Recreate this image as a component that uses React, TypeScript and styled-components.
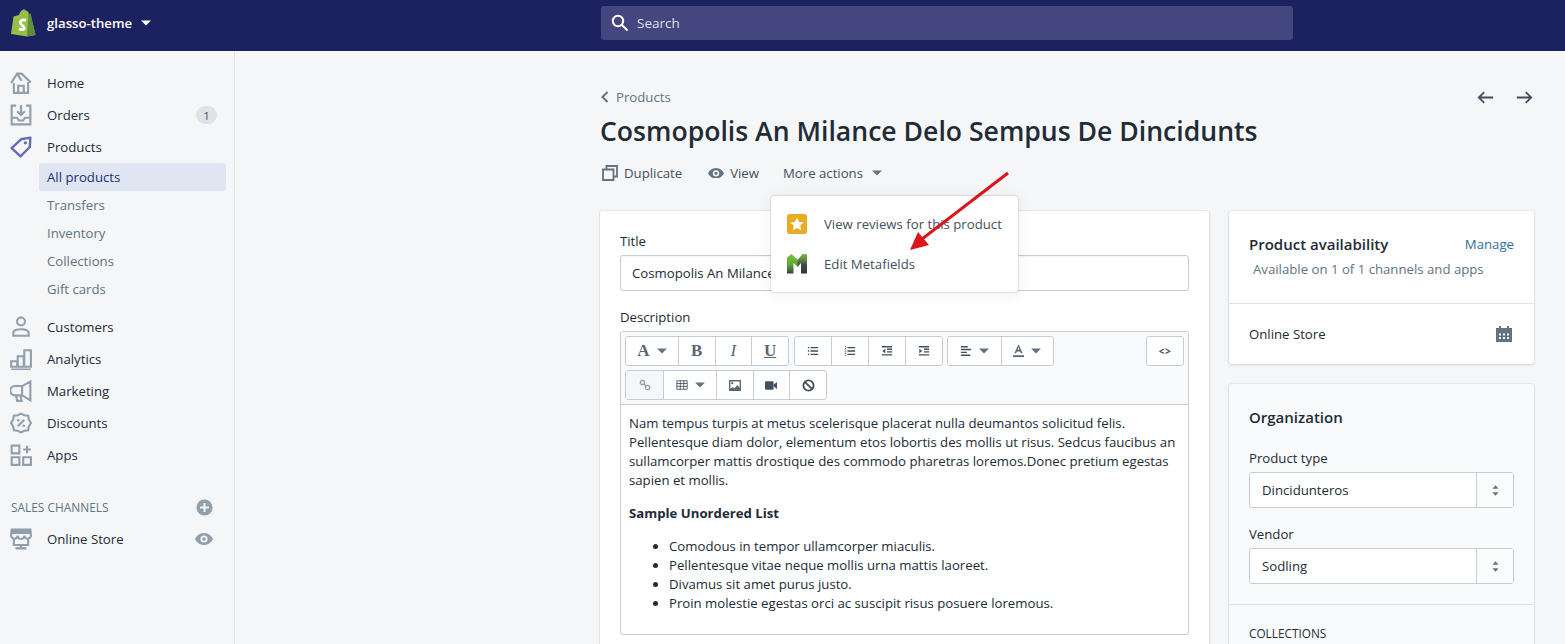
import styled, { createGlobalStyle } from "styled-components";
import { ReactNode } from "react";

const GlobalStyle = createGlobalStyle`
  html, body {
    margin: 0;
    padding: 0;
    height: 644px;
    overflow: hidden;
    background: #f4f6f8;
    font-family: "Open Sans", "Noto Sans", sans-serif;
    font-size: 13.2px;
    color: #212b36;
  }
  * { box-sizing: border-box; }
`;

const Page = styled.div`
  width: 1565px;
  height: 644px;
  overflow: hidden;
  position: relative;
`;

const TopBar = styled.header`
  height: 51px;
  padding-bottom: 5px;
  background: #1c2260;
  display: flex;
  align-items: center;
`;

const StoreArea = styled.div`
  width: 601px;
  padding-left: 11px;
  display: flex;
  align-items: center;
  color: #fff;
  font-weight: 600;
`;

const StoreName = styled.span`
  margin-left: 11px;
  margin-right: 9px;
`;

const SearchBox = styled.div`
  width: 692px;
  height: 34px;
  background: #43467f;
  border-radius: 3px;
  display: flex;
  align-items: center;
  gap: 8px;
  padding-left: 10px;
  color: #dfe3e8;
  font-size: 13.5px;
`;

const Body = styled.div`
  display: flex;
  height: 593px;
`;

const Sidebar = styled.nav`
  width: 235px;
  flex: none;
  border-right: 1px solid #dfe3e8;
  padding-top: 16px;
`;

const NavRow = styled.div`
  height: 32px;
  display: flex;
  align-items: center;
  padding-left: 11px;
  padding-right: 17px;
  color: #212b36;
  font-weight: 500;
`;

const NavIcon = styled.span`
  width: 20px;
  height: 22px;
  margin-right: 16px;
  display: flex;
  align-items: center;
  justify-content: center;
`;

const NavLabel = styled.span`
  flex: 1;
`;

const Badge = styled.span`
  width: 21px;
  height: 18px;
  border-radius: 9px;
  background: #dfe3e8;
  color: #454f5b;
  font-size: 11.5px;
  display: flex;
  align-items: center;
  justify-content: center;
`;

const EyeSlot = styled.span`
  padding-right: 4px;
`;

const SubList = styled.div`
  margin-bottom: 8px;
`;

const SubRow = styled.div<{ $active?: boolean }>`
  height: 28px;
  margin-left: 39px;
  margin-right: 8px;
  padding-left: 8px;
  display: flex;
  align-items: center;
  border-radius: 3px;
  color: ${(p) => (p.$active ? "#202e78" : "#637381")};
  background: ${(p) => (p.$active ? "#e0e5f3" : "transparent")};
  font-weight: ${(p) => (p.$active ? 500 : 400)};
`;

const ChannelsHeading = styled.div`
  margin-top: 20px;
  height: 32px;
  padding-left: 11px;
  padding-right: 21px;
  display: flex;
  align-items: center;
  justify-content: space-between;
  color: #637381;
  font-size: 11.9px;
`;

const Main = styled.main`
  flex: 1;
  padding: 0 31px 0 365px;
`;

const HeaderTop = styled.div`
  height: 20px;
  margin-top: 36px;
  display: flex;
  align-items: center;
  justify-content: space-between;
`;

const Breadcrumb = styled.div`
  display: flex;
  align-items: center;
  gap: 6px;
  color: #637381;
`;

const Pager = styled.div`
  display: flex;
  gap: 20px;
  padding-right: 1px;
`;

const Title = styled.h1`
  margin: 6px 0 0;
  font-size: 26.6px;
  line-height: 36px;
  font-weight: 600;
  color: #212b36;
`;

const Actions = styled.div`
  margin-top: 14px;
  height: 20px;
  display: flex;
  align-items: center;
  color: #454f5b;
`;

const ActionItem = styled.span<{ $after: number; $inner: number }>`
  display: flex;
  align-items: center;
  gap: ${(p) => p.$inner}px;
  padding-left: 2px;
  margin-right: ${(p) => p.$after}px;
`;

const Columns = styled.div`
  display: flex;
  gap: 20px;
  margin-top: 28px;
  align-items: flex-start;
`;

const LeftColumn = styled.div`
  width: 609px;
`;

const RightColumn = styled.div`
  width: 305px;
  display: flex;
  flex-direction: column;
  gap: 20px;
`;

const Card = styled.section<{ $tint?: boolean }>`
  background: ${(p) => (p.$tint ? "#f9fafb" : "#fff")};
  border-radius: 3px;
  box-shadow: 0 0 0 1px rgba(63, 63, 68, 0.05), 0 1px 3px 0 rgba(63, 63, 68, 0.15);
`;

const MainCardBody = styled.div`
  padding: 20px 20px 30px;
`;

const FieldLabel = styled.div`
  line-height: 20px;
  color: #212b36;
  margin-bottom: 4px;
`;

const TextInput = styled.div`
  height: 36px;
  border: 1px solid #c4cdd5;
  border-radius: 3px;
  background: #fff;
  padding-left: 11px;
  display: flex;
  align-items: center;
  margin-bottom: 16px;
  box-shadow: inset 0 1px 0 rgba(22, 29, 37, 0.03);
`;

const Editor = styled.div`
  border: 1px solid #c4cdd5;
  border-radius: 3px;
  height: 304px;
  overflow: hidden;
`;

const EditorToolbar = styled.div`
  background: #f9fafb;
  border-bottom: 1px solid #c4cdd5;
  height: 73px;
  padding: 4px 4px 0 4px;
  display: flex;
  flex-direction: column;
  gap: 4px;
`;

const ToolbarRow = styled.div`
  display: flex;
  gap: 4.5px;
`;

const ToolGroup = styled.div<{ $end?: boolean }>`
  display: flex;
  height: 30px;
  background: #fff;
  border: 1px solid #c4cdd5;
  border-radius: 3px;
  margin-left: ${(p) => (p.$end ? "auto" : "0")};
`;

const ToolButton = styled.div<{ $w?: number; $pressed?: boolean }>`
  width: ${(p) => p.$w ?? 36.75}px;
  display: flex;
  align-items: center;
  justify-content: center;
  gap: 7px;
  color: #454f5b;
  background: ${(p) => (p.$pressed ? "#f4f6f8" : "transparent")};
  & + & {
    border-left: 1px solid #c4cdd5;
  }
`;

const SerifGlyph = styled.span<{ $italic?: boolean; $underline?: boolean }>`
  font-family: "Liberation Serif", serif;
  font-weight: ${(p) => (p.$italic ? 400 : 700)};
  font-style: ${(p) => (p.$italic ? "italic" : "normal")};
  text-decoration: ${(p) => (p.$underline ? "underline" : "none")};
  font-size: 17px;
  color: #5b6770;
`;

const CodeGlyph = styled.span`
  font-size: 10px;
  font-weight: 700;
  letter-spacing: 0.5px;
`;

const EditorText = styled.div`
  padding: 9px 8px 0;
  line-height: 19px;
  color: #212b36;
`;

const Para = styled.p`
  margin: 0 0 14px;
`;

const BulletList = styled.ul`
  margin: 0;
  padding-left: 40px;
`;

const AvailabilityHead = styled.div`
  padding: 20px 20px 0;
  height: 93px;
  border-bottom: 1px solid #dfe3e8;
`;

const HeadRow = styled.div`
  display: flex;
  justify-content: space-between;
  line-height: 26px;
`;

const CardTitle = styled.h2`
  margin: 0;
  font-size: 15px;
  font-weight: 600;
  color: #212b36;
`;

const LinkText = styled.span`
  color: #2f6f9f;
`;

const Muted = styled.div`
  color: #637381;
  padding-left: 4px;
  line-height: 24px;
`;

const ChannelRow = styled.div`
  height: 60px;
  padding: 0 22px 0 20px;
  display: flex;
  align-items: center;
  justify-content: space-between;
  color: #212b36;
`;

const OrgSection = styled.div`
  padding: 20px 20px 20px;
  border-bottom: 1px solid #dfe3e8;
`;

const OrgTitle = styled(CardTitle)`
  line-height: 26px;
  margin-bottom: 18px;
`;

const SelectBox = styled.div`
  height: 36px;
  border: 1px solid #c4cdd5;
  border-radius: 3px;
  background: #fff;
  display: flex;
  margin-bottom: 16px;
  &:last-child {
    margin-bottom: 0;
  }
`;

const SelectValue = styled.div`
  flex: 1;
  padding-left: 12px;
  display: flex;
  align-items: center;
  color: #212b36;
`;

const SelectStepper = styled.div`
  width: 37px;
  border-left: 1px solid #c4cdd5;
  background: #fafbfb;
  display: flex;
  align-items: center;
  justify-content: center;
`;

const CollectionsSection = styled.div`
  padding: 20px;
  font-size: 11.8px;
  color: #212b36;
  line-height: 16px;
`;

const Popover = styled.div`
  position: absolute;
  left: 771px;
  top: 196px;
  width: 247px;
  height: 96px;
  background: #fff;
  border-radius: 3px;
  box-shadow: 0 0 0 1px rgba(6, 44, 82, 0.1), 0 2px 16px rgba(33, 43, 54, 0.08);
  padding: 8px 16px;
  z-index: 2;
`;

const PopoverItem = styled.div`
  height: 40px;
  display: flex;
  align-items: center;
  gap: 17px;
  color: #454f5b;
`;

const ArrowMark = styled.svg`
  position: absolute;
  left: 900px;
  top: 165px;
  z-index: 3;
`;

const Caret = ({ color = "#637381", size = 10 }: { color?: string; size?: number }) => (
  <svg width={size} height={size * 0.6} viewBox="0 0 10 6">
    <path d="M0 0.5h10L5 5.5z" fill={color} />
  </svg>
);

const NavSvg = styled.svg`
  display: block;
  flex: none;
`;

const Ico = ({ children }: { children: ReactNode }) => (
  <NavSvg width={22} height={22} viewBox="0 0 20 20" fill="none" stroke="#919eab" strokeWidth={1.9}>
    {children}
  </NavSvg>
);

const HomeIcon = () => (
  <Ico>
    <path d="M1 10L6.500 1.500h4L19 9.500M3.500 10v9h13V9M6.500 1.500L10.500 8M7.500 19v-6.500h5V19" />
  </Ico>
);
const OrdersIcon = () => (
  <Ico>
    <path d="M5.500 1.500H1.500v17h17v-17h-4M1.500 12.500h5l1.500 2.500h4l1.500-2.500h5M10 1v9M6.500 6.500l3.500 3.500 3.500-3.500" />
  </Ico>
);
const TagIcon = () => (
  <Ico>
    <path d="M1.500 11L10 3l8.500-1.500L18 10l-8.500 8.500z" stroke="#666db3" strokeLinejoin="round" strokeWidth={2.2} />
    <circle cx="14" cy="6.200" r="1.500" fill="#666db3" stroke="none" />
  </Ico>
);
const CustomerIcon = () => (
  <Ico>
    <circle cx="10" cy="5" r="3.600" />
    <path d="M3 15.500c0-2.600 3.500-3.500 7-3.500s7 .9 7 3.500V18H3z" />
  </Ico>
);
const AnalyticsIcon = () => (
  <Ico>
    <path d="M1 12h5.500v5H1zM7 7.500h5.500V17H7zM13 2h6v15h-6zM1 19.500h18" />
  </Ico>
);
const MarketingIcon = () => (
  <Ico>
    <path d="M18.500 1.500v17L11 14H4.500a3.500 3.500 0 010-8.500H11zM5.500 14l1 5h4l-1-5M11 6v8" />
  </Ico>
);
const DiscountIcon = () => (
  <Ico>
    <path d="M10 1.500l3 1.500 3.500.3.500 3.300L19 10l-2 3.400-.5 3.300-3.500.3-3 1.500-3-1.500-3.500-.3-.5-3.300L1 10l2-3.400.5-3.300L7 3z" />
    <path d="M7 13l6-6" />
    <circle cx="7.500" cy="7.500" r="1.200" fill="#919eab" stroke="none" />
    <circle cx="12.500" cy="12.500" r="1.200" fill="#919eab" stroke="none" />
  </Ico>
);
const AppsIcon = () => (
  <Ico>
    <path d="M1.500 1.500h7v7h-7zM1.500 12h7v7h-7zM12 12h7v7h-7zM15.500 1.500v7M12 5h7" />
  </Ico>
);
const StoreIcon = () => (
  <Ico>
    <path d="M1.500 1.500h17l.5 5a3 3 0 01-6 .5 3 3 0 01-6 0 3 3 0 01-6-.5zM3.500 10v5.500h13V10M10 15.500v3M5 18.500h10" />
    <path d="M1.500 1.500h17l.4 4H1.100z" fill="#919eab" stroke="none" />
  </Ico>
);

const EyeSvg = styled.svg`
  display: block;
`;

const EyeIcon = ({ color = "#919eab", w = 18 }: { color?: string; w?: number }) => (
  <EyeSvg width={w} height={w * 0.67} viewBox="0 0 18 12">
    <path
      fillRule="evenodd"
      d="M9 0C4.500 0 1.200 3.200 0 6c1.200 2.800 4.500 6 9 6s7.800-3.200 9-6c-1.200-2.800-4.500-6-9-6zm0 2.400a3.600 3.600 0 110 7.200 3.600 3.600 0 010-7.200zm0 1.800a1.800 1.800 0 100 3.600 1.800 1.800 0 000-3.600z"
      fill={color}
    />
  </EyeSvg>
);

const PlusCircle = () => (
  <svg width="17" height="17" viewBox="0 0 17 17">
    <circle cx="8.500" cy="8.500" r="8" fill="#919eab" />
    <path d="M8.500 4v9M4 8.500h9" stroke="#f4f6f8" strokeWidth="2" />
  </svg>
);

const ShopifyLogo = () => (
  <svg width="25" height="28" viewBox="0 0 25 28" style={{ display: "block" }}>
    <path
      d="M2.500 7.500L8 6c.8-3 2.800-5.500 5-5.500 1 0 1.500.6 2 1.200 1.500-.2 2.500 1.500 3 3.300l1.500-.3L24.500 26 16 27.500 0 25z"
      fill="#95bf47"
    />
    <path d="M19.500 4.700L24.500 26 16 27.500 17.500 5z" fill="#5e8e3e" />
    <path
      d="M15 11.500c-2-1-5.500-.7-5.800 2-.3 2.500 4.500 3.200 4.200 5.800-.2 1.700-3 1.800-5.400.4"
      stroke="#fff"
      strokeWidth="2.800"
      fill="none"
    />
  </svg>
);

const SearchIcon = () => (
  <svg width="18" height="18" viewBox="0 0 18 18" fill="none" stroke="#fff" strokeWidth="2">
    <circle cx="7" cy="7" r="5.200" />
    <path d="M11 11l5.500 5.500" />
  </svg>
);

const ArrowSvg = styled.svg<{ $flip?: boolean }>`
  transform: ${(p) => (p.$flip ? "scaleX(-1)" : "none")};
`;

const PagerArrow = ({ flip }: { flip?: boolean }) => (
  <ArrowSvg $flip={flip} width="18" height="15" viewBox="0 0 20 16" fill="none" stroke="#454f5b" strokeWidth="2">
    <path d="M18 8H2M8 2L2 8l6 6" />
  </ArrowSvg>
);

const ChevronLeft = () => (
  <svg width="10" height="14" viewBox="0 0 10 14" fill="none" stroke="#637381" strokeWidth="2">
    <path d="M7.500 2L2.500 7l5 5" />
  </svg>
);

const DuplicateIcon = () => (
  <svg width="16" height="16" viewBox="0 0 16 16" fill="none" stroke="#637381" strokeWidth="1.800">
    <path d="M4.500 4.500V1h10.500v10.500h-3.500" />
    <path d="M1 4.500h10.500V15H1z" />
  </svg>
);

const StarBadge = () => (
  <svg width="20" height="20" viewBox="0 0 20 20" style={{ display: "block" }}>
    <rect width="20" height="20" rx="2.500" fill="#e8ab25" />
    <path d="M10 3.500l2 4.400 4.800.5-3.600 3.200 1 4.700-4.200-2.400-4.200 2.400 1-4.700L3.200 8.400 8 7.900z" fill="#fff" />
  </svg>
);

const MetafieldsLogo = () => (
  <svg width="20" height="20" viewBox="0 0 20 20" style={{ display: "block" }}>
    <defs>
      <linearGradient id="mfLeft" x1="0" y1="0" x2="0" y2="1">
        <stop offset="0" stopColor="#7ec242" />
        <stop offset="0.55" stopColor="#5fa83a" />
        <stop offset="1" stopColor="#3a3f3f" />
      </linearGradient>
      <linearGradient id="mfRight" x1="0" y1="0" x2="0" y2="1">
        <stop offset="0" stopColor="#76bd40" />
        <stop offset="0.35" stopColor="#5a7a44" />
        <stop offset="0.55" stopColor="#454a48" />
        <stop offset="1" stopColor="#2f3336" />
      </linearGradient>
    </defs>
    <path d="M0 19.500V3.500L4.500 0 11 6v7L6.500 9v10.500z" fill="url(#mfLeft)" />
    <path d="M10.500 6l5-6H20v19.500h-6V9l-3.500 4z" fill="url(#mfRight)" />
  </svg>
);

const ToolSvg = ({ children, w = 12 }: { children: ReactNode; w?: number }) => (
  <svg width={w} height={w} viewBox="0 0 14 14" fill="none" stroke="#454f5b" strokeWidth="1.600">
    {children}
  </svg>
);

const CalendarIcon = () => (
  <svg width="16" height="16" viewBox="0 0 16 16">
    <path d="M3 0h2v2h6V0h2v2h3v3H0V2h3z" fill="#637381" />
    <path d="M0 5h16v11H0z" fill="#637381" />
    <path d="M3 7.500h2v2H3zM7 7.500h2v2H7zM11 7.500h2v2h-2zM3 11h2v2H3zM7 11h2v2H7zM11 11h2v2h-2z" fill="#fff" />
  </svg>
);

const StepperIcon = () => (
  <svg width="7" height="11" viewBox="0 0 8 12">
    <path d="M4 0l3.500 4H.5zM4 12L.5 8h7z" fill="#637381" />
  </svg>
);

const Select = ({ value }: { value: string }) => (
  <SelectBox>
    <SelectValue>{value}</SelectValue>
    <SelectStepper>
      <StepperIcon />
    </SelectStepper>
  </SelectBox>
);

const topNav = [
  { label: "Home", icon: <HomeIcon /> },
  { label: "Orders", icon: <OrdersIcon />, badge: "1" },
  { label: "Products", icon: <TagIcon /> },
];

const lowerNav = [
  { label: "Customers", icon: <CustomerIcon /> },
  { label: "Analytics", icon: <AnalyticsIcon /> },
  { label: "Marketing", icon: <MarketingIcon /> },
  { label: "Discounts", icon: <DiscountIcon /> },
  { label: "Apps", icon: <AppsIcon /> },
];

const subNav = ["All products", "Transfers", "Inventory", "Collections", "Gift cards"];

const App = () => {
  return (
    <Page>
      <GlobalStyle />
      <TopBar>
        <StoreArea>
          <ShopifyLogo />
          <StoreName>glasso-theme</StoreName>
          <Caret color="#fff" />
        </StoreArea>
        <SearchBox>
          <SearchIcon />
          Search
        </SearchBox>
      </TopBar>
      <Body>
        <Sidebar>
          {topNav.map((item) => (
            <NavRow key={item.label}>
              <NavIcon>{item.icon}</NavIcon>
              <NavLabel>{item.label}</NavLabel>
              {item.badge && <Badge>{item.badge}</Badge>}
            </NavRow>
          ))}
          <SubList>
            {subNav.map((label, i) => (
              <SubRow key={label} $active={i === 0}>
                {label}
              </SubRow>
            ))}
          </SubList>
          {lowerNav.map((item) => (
            <NavRow key={item.label}>
              <NavIcon>{item.icon}</NavIcon>
              <NavLabel>{item.label}</NavLabel>
            </NavRow>
          ))}
          <ChannelsHeading>
            SALES CHANNELS
            <PlusCircle />
          </ChannelsHeading>
          <NavRow>
            <NavIcon>
              <StoreIcon />
            </NavIcon>
            <NavLabel>Online Store</NavLabel>
            <EyeSlot>
              <EyeIcon />
            </EyeSlot>
          </NavRow>
        </Sidebar>
        <Main>
          <HeaderTop>
            <Breadcrumb>
              <ChevronLeft />
              Products
            </Breadcrumb>
            <Pager>
              <PagerArrow />
              <PagerArrow flip />
            </Pager>
          </HeaderTop>
          <Title>Cosmopolis An Milance Delo Sempus De Dincidunts</Title>
          <Actions>
            <ActionItem $after={24} $inner={6}>
              <DuplicateIcon />
              Duplicate
            </ActionItem>
            <ActionItem $after={22} $inner={6}>
              <EyeIcon color="#637381" w={16} />
              View
            </ActionItem>
            <ActionItem $after={0} $inner={9}>
              More actions
              <Caret />
            </ActionItem>
          </Actions>
          <Columns>
            <LeftColumn>
              <Card>
                <MainCardBody>
                  <FieldLabel>Title</FieldLabel>
                  <TextInput>Cosmopolis An Milance Delo Sempus De Dincidunts</TextInput>
                  <FieldLabel>Description</FieldLabel>
                  <Editor>
                    <EditorToolbar>
                      <ToolbarRow>
                        <ToolGroup>
                          <ToolButton $w={51.75}>
                            <SerifGlyph>A</SerifGlyph>
                            <Caret />
                          </ToolButton>
                          <ToolButton>
                            <SerifGlyph>B</SerifGlyph>
                          </ToolButton>
                          <ToolButton>
                            <SerifGlyph $italic>I</SerifGlyph>
                          </ToolButton>
                          <ToolButton>
                            <SerifGlyph $underline>U</SerifGlyph>
                          </ToolButton>
                        </ToolGroup>
                        <ToolGroup>
                          <ToolButton>
                            <ToolSvg>
                              <path d="M4 3h9M4 7h9M4 11h9M1 3h1.500M1 7h1.500M1 11h1.500" />
                            </ToolSvg>
                          </ToolButton>
                          <ToolButton>
                            <ToolSvg>
                              <path d="M4 3h9M4 7h9M4 11h9" />
                              <path d="M1 2h1.500M1 4h1.500M1 6h1.500M1 8h1.500M1 10h1.500M1 12h1.500" strokeWidth="1" />
                            </ToolSvg>
                          </ToolButton>
                          <ToolButton>
                            <ToolSvg>
                              <path d="M1 2h12M7 5h6M7 8h6M1 11.500h12" />
                              <path d="M5 4.500v5L1.500 7z" fill="#454f5b" stroke="none" />
                            </ToolSvg>
                          </ToolButton>
                          <ToolButton>
                            <ToolSvg>
                              <path d="M1 2h12M7 5h6M7 8h6M1 11.500h12" />
                              <path d="M1.500 4.500v5L5 7z" fill="#454f5b" stroke="none" />
                            </ToolSvg>
                          </ToolButton>
                        </ToolGroup>
                        <ToolGroup>
                          <ToolButton $w={52.5}>
                            <ToolSvg>
                              <path d="M1 2h8M1 5.300h12M1 8.600h7M1 12h11" />
                            </ToolSvg>
                            <Caret />
                          </ToolButton>
                          <ToolButton $w={52.5}>
                            <svg width="11" height="14" viewBox="0 0 12 15">
                              <path d="M6 0L1.500 10h2l.7-2h3.600l.7 2h2zM5 6l1-3 1 3z" fill="#5b6770" fillRule="evenodd" />
                              <path d="M0 12h12v2H0z" fill="#5b6770" />
                            </svg>
                            <Caret />
                          </ToolButton>
                        </ToolGroup>
                        <ToolGroup $end>
                          <ToolButton $w={36}>
                            <CodeGlyph>&lt;&gt;</CodeGlyph>
                          </ToolButton>
                        </ToolGroup>
                      </ToolbarRow>
                      <ToolbarRow>
                        <ToolGroup>
                          <ToolButton $pressed $w={37}>
                            <ToolSvg>
                              <g stroke="#919eab" strokeWidth="1.500">
                                <circle cx="4" cy="4" r="2.500" />
                                <circle cx="10" cy="10" r="2.500" />
                                <path d="M5.500 5.500l3 3" />
                              </g>
                            </ToolSvg>
                          </ToolButton>
                          <ToolButton $w={53}>
                            <ToolSvg>
                              <path d="M1 2h12v10H1zM1 5.300h12M1 8.600h12M5 2v10M9 2v10" strokeWidth="1" />
                            </ToolSvg>
                            <Caret />
                          </ToolButton>
                          <ToolButton $w={36.67}>
                            <svg width="12" height="11" viewBox="0 0 13 12">
                              <path d="M0 0h13v12H0z" fill="#5b6770" />
                              <path d="M1.500 1.500h10v7L9 5.500 6 9 4 7.500 1.500 9.500z" fill="#fff" />
                              <circle cx="3.500" cy="3.500" r="1.200" fill="#5b6770" />
                            </svg>
                          </ToolButton>
                          <ToolButton $w={36.67}>
                            <svg width="12" height="9" viewBox="0 0 14 10">
                              <rect width="10" height="10" rx="1.500" fill="#454f5b" />
                              <path d="M10 4l4-3v8l-4-3z" fill="#454f5b" />
                            </svg>
                          </ToolButton>
                          <ToolButton $w={36.67}>
                            <svg width="13" height="13" viewBox="0 0 14 14" fill="none" stroke="#454f5b" strokeWidth="2">
                              <circle cx="7" cy="7" r="5.500" />
                              <path d="M3 3l8 8" />
                            </svg>
                          </ToolButton>
                        </ToolGroup>
                      </ToolbarRow>
                    </EditorToolbar>
                    <EditorText>
                      <Para>
                        Nam tempus turpis at metus scelerisque placerat nulla deumantos solicitud felis. Pellentesque
                        diam dolor, elementum etos lobortis des mollis ut risus. Sedcus faucibus an sullamcorper mattis
                        drostique des commodo pharetras loremos.Donec pretium egestas sapien et mollis.
                      </Para>
                      <Para>
                        <b>Sample Unordered List</b>
                      </Para>
                      <BulletList>
                        <li>Comodous in tempor ullamcorper miaculis.</li>
                        <li>Pellentesque vitae neque mollis urna mattis laoreet.</li>
                        <li>Divamus sit amet purus justo.</li>
                        <li>Proin molestie egestas orci ac suscipit risus posuere loremous.</li>
                      </BulletList>
                    </EditorText>
                  </Editor>
                </MainCardBody>
              </Card>
            </LeftColumn>
            <RightColumn>
              <Card>
                <AvailabilityHead>
                  <HeadRow>
                    <CardTitle>Product availability</CardTitle>
                    <LinkText>Manage</LinkText>
                  </HeadRow>
                  <Muted>Available on 1 of 1 channels and apps</Muted>
                </AvailabilityHead>
                <ChannelRow>
                  Online Store
                  <CalendarIcon />
                </ChannelRow>
              </Card>
              <Card $tint>
                <OrgSection>
                  <OrgTitle>Organization</OrgTitle>
                  <FieldLabel>Product type</FieldLabel>
                  <Select value="Dincidunteros" />
                  <FieldLabel>Vendor</FieldLabel>
                  <Select value="Sodling" />
                </OrgSection>
                <CollectionsSection>COLLECTIONS</CollectionsSection>
              </Card>
            </RightColumn>
          </Columns>
        </Main>
      </Body>
      <Popover>
        <PopoverItem>
          <StarBadge />
          View reviews for this product
        </PopoverItem>
        <PopoverItem>
          <MetafieldsLogo />
          Edit Metafields
        </PopoverItem>
      </Popover>
      <ArrowMark width="116" height="92" viewBox="0 0 116 92">
        <path d="M108 8L22 74" stroke="#d9161c" strokeWidth="3" fill="none" />
        <path d="M10 85L18 67l11 13z" fill="#d9161c" />
      </ArrowMark>
    </Page>
  );
};

export default App;
